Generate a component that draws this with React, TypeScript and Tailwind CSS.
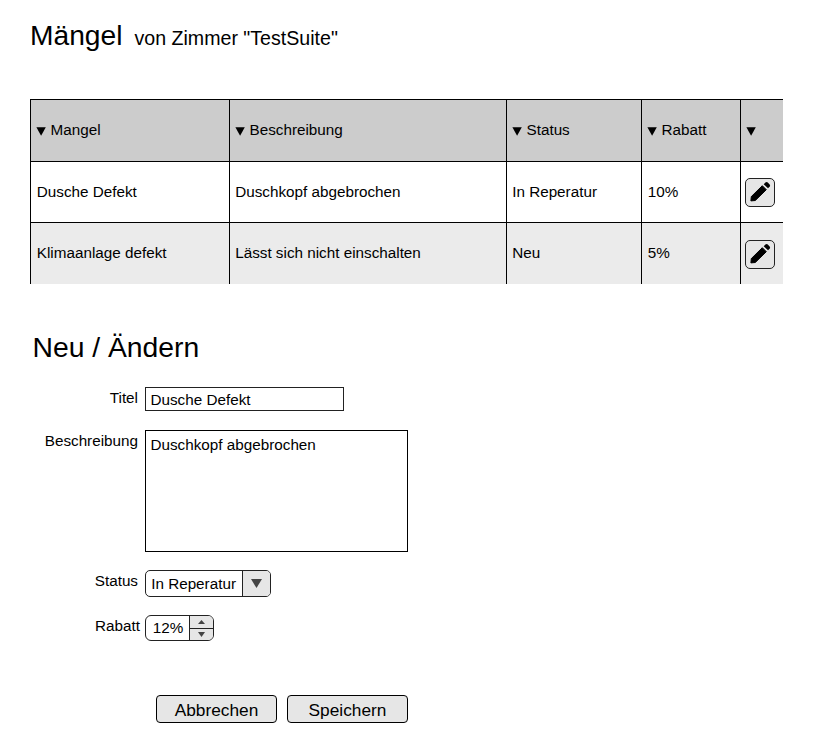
import type { ReactNode } from "react";

const columns = ["Mangel", "Beschreibung", "Status", "Rabatt", ""];
const rows = [
  ["Dusche Defekt", "Duschkopf abgebrochen", "In Reperatur", "10%"],
  ["Klimaanlage defekt", "Lässt sich nicht einschalten", "Neu", "5%"],
];
const grid = "grid grid-cols-[199px_277px_135px_99px_43px]";

function SortArrow() {
  return (
    <svg width="10" height="9" viewBox="0 0 10 9" className="mt-[2px] mr-[4.5px] shrink-0">
      <path d="M0.4 0.3H9.8L5.1 8.7Z" fill="#000" />
    </svg>
  );
}

function EditButton() {
  return (
    <button className="flex h-[29px] w-[30px] shrink-0 items-center justify-center rounded-[5px] border border-[#222] bg-[#e6e6e6]">
      <svg width="28" height="27" viewBox="0 0 28 27">
        <path d="M4.9 21.9L5.3 17.6L16.3 6.7L20.3 10.7L9.3 21.5Z" fill="#000" stroke="#000" strokeLinejoin="round" />
        <path d="M17.7 5.2L19.4 3.6Q20.6 2.6 21.8 3.6L23.6 5.4Q24.6 6.5 23.6 7.7L22 9.3Z" fill="#000" />
      </svg>
    </button>
  );
}

function FormRow({ label, labelClass, className, children }: { label: string; labelClass: string; className: string; children: ReactNode }) {
  return (
    <div className={`flex ${className}`}>
      <label className={`w-[145px] shrink-0 text-right leading-[22px] ${labelClass}`}>{label}</label>
      {children}
    </div>
  );
}

export default function App() {
  return (
    <main className="h-[746px] w-[814px] overflow-hidden bg-white font-['Liberation_Sans',Arial,sans-serif] text-[15.25px] text-black">
      <header className="flex h-[99px] items-baseline pt-[19px] pl-[30px]">
        <h1 className="w-[104.5px] text-[28.2px] leading-[32px]">Mängel</h1>
        <span className="text-[19.6px] leading-[24px] whitespace-nowrap">von Zimmer "TestSuite"</span>
      </header>

      <section className="ml-[30px] w-[753px]">
        <div className={`${grid} h-[62px] border-t border-black bg-[#ccc]`}>
          {columns.map((c, i) => (
            <div key={i} className="flex items-center border-l border-black pl-[5px]">
              <SortArrow />
              {c}
            </div>
          ))}
        </div>
        {rows.map((row, r) => (
          <div key={r} className={`${grid} border-t border-black ${r ? "h-[62px] bg-[#ebebeb]" : "h-[61px]"}`}>
            {row.map((c, i) => (
              <div key={i} className={`flex items-center border-l border-black whitespace-nowrap ${i === 0 || i === 3 ? "pl-[5.8px]" : "pl-[5.2px]"}`}>{c}</div>
            ))}
            <div className={`flex items-start border-l border-black pl-[4px] ${r ? "pt-[17px]" : "pt-[16px]"}`}>
              <EditButton />
            </div>
          </div>
        ))}
      </section>

      <h2 className="mt-[47px] ml-[32.5px] text-[28.3px] leading-[32px]">Neu / Ändern</h2>

      <form>
        <FormRow label="Titel" labelClass="pr-[7px]" className="mt-[24px] h-[24px]">
          <input className="h-[24px] w-[199px] border border-[#222] bg-white pl-[4.5px] outline-none" defaultValue="Dusche Defekt" />
        </FormRow>
        <FormRow label="Beschreibung" labelClass="pr-[7px]" className="mt-[19px] h-[122px]">
          <textarea className="h-[122px] w-[263px] resize-none border border-black bg-white px-[4.5px] py-[4px] leading-[20px] outline-none" defaultValue="Duschkopf abgebrochen" />
        </FormRow>
        <FormRow label="Status" labelClass="pr-[7px]" className="mt-[18px] h-[27px]">
          <div className="flex h-[27px] w-[126px] overflow-hidden rounded-[5px] border border-[#222]">
            <span className="w-[96px] pl-[5.2px] leading-[25px] whitespace-nowrap">In Reperatur</span>
            <span className="flex flex-1 items-center justify-center border-l border-[#222] bg-[#e6e6e6]">
              <svg width="11" height="9" viewBox="0 0 11 9">
                <path d="M0 0H11L5.5 9Z" fill="#444" />
              </svg>
            </span>
          </div>
        </FormRow>
        <FormRow label="Rabatt" labelClass="pr-[5px]" className="mt-[18px] h-[26px]">
          <div className="flex h-[26px] w-[69px] overflow-hidden rounded-[6px] border border-[#222]">
            <span className="w-[43px] pl-[6.8px] leading-[24px]">12%</span>
            <span className="flex flex-1 flex-col border-l border-[#222] bg-[#e6e6e6]">
              <span className="flex h-[13px] items-center justify-center border-b border-[#222]">
                <svg width="7" height="4" viewBox="0 0 7 4">
                  <path d="M0 4H7L3.5 0Z" fill="#444" />
                </svg>
              </span>
              <span className="flex flex-1 items-start justify-center pt-[3px]">
                <svg width="7" height="5" viewBox="0 0 7 5">
                  <path d="M0 0H7L3.5 5Z" fill="#444" />
                </svg>
              </span>
            </span>
          </div>
        </FormRow>
        <div className="mt-[54px] ml-[156px] flex gap-[10px] text-[17.3px]">
          <button type="button" className="h-[28px] w-[121px] rounded-[4px] border border-black bg-[#e6e6e6] pt-[2px]">Abbrechen</button>
          <button type="button" className="h-[28px] w-[121px] rounded-[4px] border border-black bg-[#e6e6e6] pt-[2px]">Speichern</button>
        </div>
      </form>
    </main>
  );
}
